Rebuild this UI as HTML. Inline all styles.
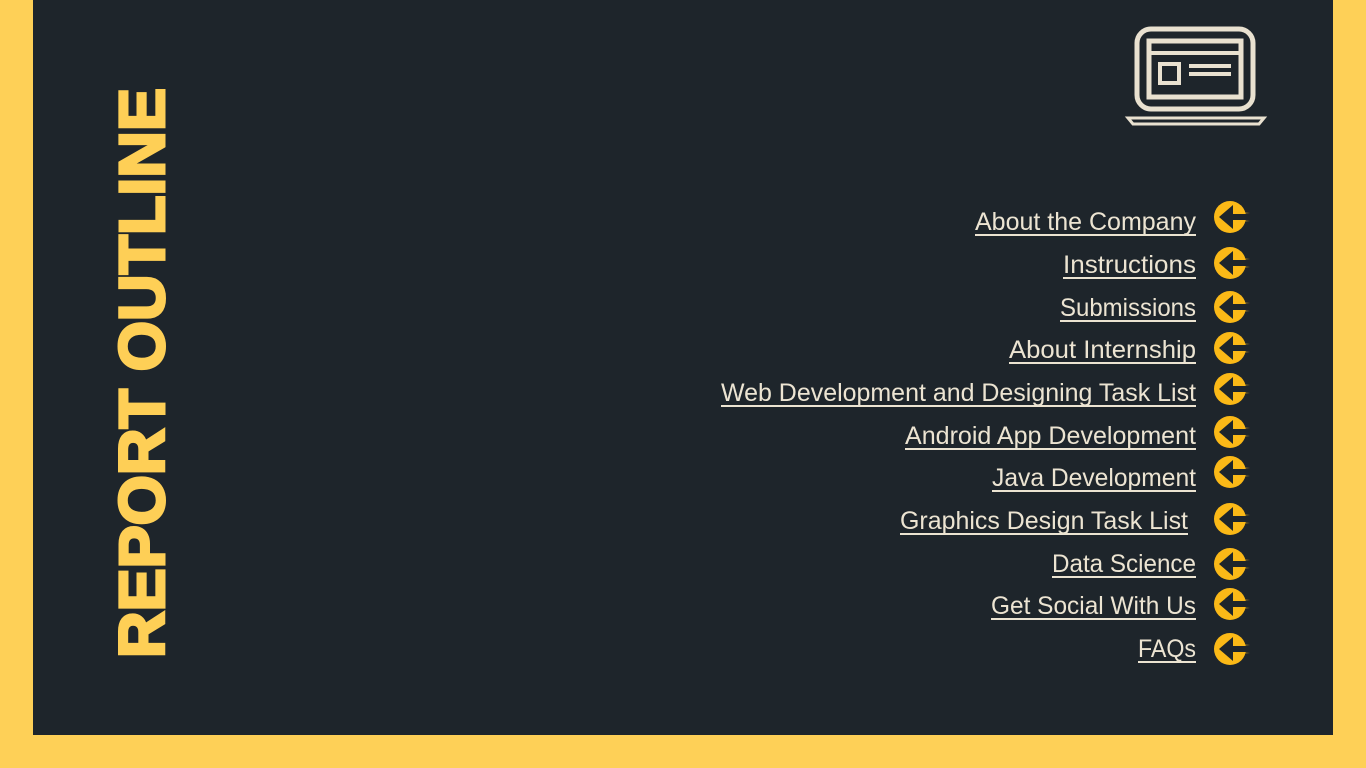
<!DOCTYPE html>
<html><head><meta charset="utf-8"><style>
html,body{margin:0;padding:0;background:#fed057;}
svg{display:block}
</style></head><body>
<svg width="1366" height="768" viewBox="0 0 1366 768" xmlns="http://www.w3.org/2000/svg">
<rect width="1366" height="768" fill="#fed057"/>
<rect x="33" y="0" width="1300" height="735" fill="#1e252b"/>
<text transform="translate(164,658) rotate(-90)" style="font-family:'Liberation Sans',sans-serif;font-weight:700" font-size="64" fill="#fecf56" stroke="#fecf56" stroke-width="3" textLength="570" lengthAdjust="spacingAndGlyphs">REPORT OUTLINE</text>
<g fill="none" stroke="#e9e1d0" stroke-width="5">
<rect x="1137" y="29" width="116" height="80" rx="14"/>
<rect x="1149" y="41" width="92" height="56"/>
<line x1="1149" y1="53" x2="1241" y2="53" stroke-width="4"/>
<rect x="1160" y="64" width="19" height="19" stroke-width="4"/>
<line x1="1189" y1="66" x2="1231" y2="66" stroke-width="4"/>
<line x1="1189" y1="74" x2="1231" y2="74" stroke-width="4"/>
<path d="M1128 118 H1264 L1259 124 H1133 Z" stroke-width="3"/>
</g>
<g style="font-family:'Liberation Sans',sans-serif" font-size="25" fill="#ece4d2">
<text x="975" y="230" textLength="221" lengthAdjust="spacingAndGlyphs">About the Company</text>
<text x="1063" y="273" textLength="133" lengthAdjust="spacingAndGlyphs">Instructions</text>
<text x="1060" y="316" textLength="136" lengthAdjust="spacingAndGlyphs">Submissions</text>
<text x="1009" y="358" textLength="187" lengthAdjust="spacingAndGlyphs">About Internship</text>
<text x="721" y="401" textLength="475" lengthAdjust="spacingAndGlyphs">Web Development and Designing Task List</text>
<text x="905" y="444" textLength="291" lengthAdjust="spacingAndGlyphs">Android App Development</text>
<text x="992" y="486" textLength="204" lengthAdjust="spacingAndGlyphs">Java Development</text>
<text x="900" y="529" textLength="288" lengthAdjust="spacingAndGlyphs">Graphics Design Task List</text>
<text x="1052" y="572" textLength="144" lengthAdjust="spacingAndGlyphs">Data Science</text>
<text x="991" y="614" textLength="205" lengthAdjust="spacingAndGlyphs">Get Social With Us</text>
<text x="1138" y="657" textLength="58" lengthAdjust="spacingAndGlyphs">FAQs</text>
</g>
<g stroke="#ece4d2" stroke-width="2">
<line x1="975" y1="235" x2="1196" y2="235"/>
<line x1="1063" y1="278" x2="1196" y2="278"/>
<line x1="1060" y1="321" x2="1196" y2="321"/>
<line x1="1009" y1="363" x2="1196" y2="363"/>
<line x1="721" y1="406" x2="1196" y2="406"/>
<line x1="905" y1="449" x2="1196" y2="449"/>
<line x1="992" y1="491" x2="1196" y2="491"/>
<line x1="900" y1="534" x2="1188" y2="534"/>
<line x1="1052" y1="577" x2="1196" y2="577"/>
<line x1="991" y1="619" x2="1196" y2="619"/>
<line x1="1138" y1="662" x2="1196" y2="662"/>
</g>
<defs>
<g id="ar">
<circle cx="0" cy="0" r="16" fill="#fbb917"/>
<path d="M-11 0 L3 -12 L3 -3 L20 -3 L20 3 L3 3 L3 12 Z" fill="#1e252b"/>
<path d="M6 -5 L20 -4 L6 -3 Z M6 3 L20 4 L6 5 Z" fill="#fbb917"/>
</g>
</defs>
<use href="#ar" x="1230" y="217"/>
<use href="#ar" x="1230" y="263"/>
<use href="#ar" x="1230" y="307"/>
<use href="#ar" x="1230" y="348"/>
<use href="#ar" x="1230" y="389"/>
<use href="#ar" x="1230" y="432"/>
<use href="#ar" x="1230" y="472"/>
<use href="#ar" x="1230" y="519"/>
<use href="#ar" x="1230" y="564"/>
<use href="#ar" x="1230" y="604"/>
<use href="#ar" x="1230" y="649"/>
</svg>
</body></html>
